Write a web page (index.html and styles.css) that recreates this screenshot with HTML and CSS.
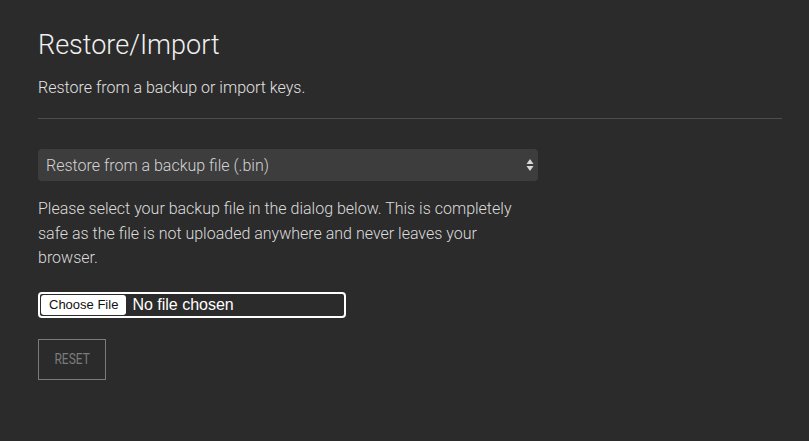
FILE: index.html
```html
<!DOCTYPE html>
<html lang="en">
<head>
  <meta charset="UTF-8" />
  <meta name="viewport" content="width=device-width, initial-scale=1.0"/>
  <title>Restore/Import</title>
  <link rel="stylesheet" href="styles.css">
</head>
<body>

<div class="page">
  <h1>Restore/Import</h1>
  <p class="lead">Restore from a backup or import keys.</p>
  <hr>

  <div class="select-wrap">
    <select class="mode">
      <option>Restore from a backup file (.bin)</option>
      <option>Import keys</option>
    </select>
    <svg class="arrows" width="8" height="14" viewBox="0 0 8 14"><path d="M4 1 L7.5 6 H0.5 Z M4 13 L7.5 8 H0.5 Z" fill="#d8d8d8"/></svg>
  </div>

  <p class="info">Please select your backup file in the dialog below. This is completely safe as the file is not uploaded anywhere and never leaves your browser.</p>

  <input type="file" class="file-input">

  <div><button class="reset-btn"><span>RESET</span></button></div>
</div>

</body>
</html>
```

FILE: styles.css
```css
body { margin: 0; background-color: #2b2b2b; color: #e2e2e2; font-family: Roboto, "Liberation Sans", sans-serif; font-weight: 300; }
.page { padding: 28px 27px 40px 38px; }
h1 { font-size: 27px; font-weight: 300; margin: 0; line-height: 34px; color: #f0f0f0; }
.lead { font-size: 16px; margin: 16px 0 0; line-height: 20px; }
hr { border: none; border-top: 1px solid #4e4e4e; margin: 20px 0 0; }
.select-wrap { position: relative; width: 500px; margin-top: 30px; }
.mode {
  -webkit-appearance: none; appearance: none; width: 100%; height: 32px; border: none; border-radius: 4px;
  background-color: #3d3d3d; color: #d4d4d4; font-family: Roboto, sans-serif; font-weight: 300; font-size: 16px;
  padding: 0 8px; outline: none;
}
.arrows { position: absolute; right: 4px; top: 9px; pointer-events: none; }
.info { width: 500px; font-size: 16px; line-height: 24.5px; margin: 16px 0 0; color: #dcdcdc; }
.file-input {
  display: block; box-sizing: border-box; width: 308px; height: 26px; margin-top: 21px; border: 2px solid #fff; border-radius: 4px;
  background: #2b2b2b; color: #fff; font-family: "Liberation Sans", Arial, sans-serif; font-size: 16px; padding: 1px;
}
.file-input::file-selector-button {
  background: #fff; color: #111; border: none; border-radius: 3px; height: 20px; padding: 0 8px; margin-right: 6px;
  font-family: "Liberation Sans", Arial, sans-serif; font-size: 13px;
}
.reset-btn {
  margin-top: 21px; width: 68px; height: 41px; background: transparent; border: 1px solid #7b7b7b; color: #7b7b7b;
  font-family: Roboto, sans-serif; font-size: 15px; font-weight: 400; cursor: pointer; padding: 0;
}
.reset-btn span { display: inline-block; transform: scaleX(0.8); }
```
